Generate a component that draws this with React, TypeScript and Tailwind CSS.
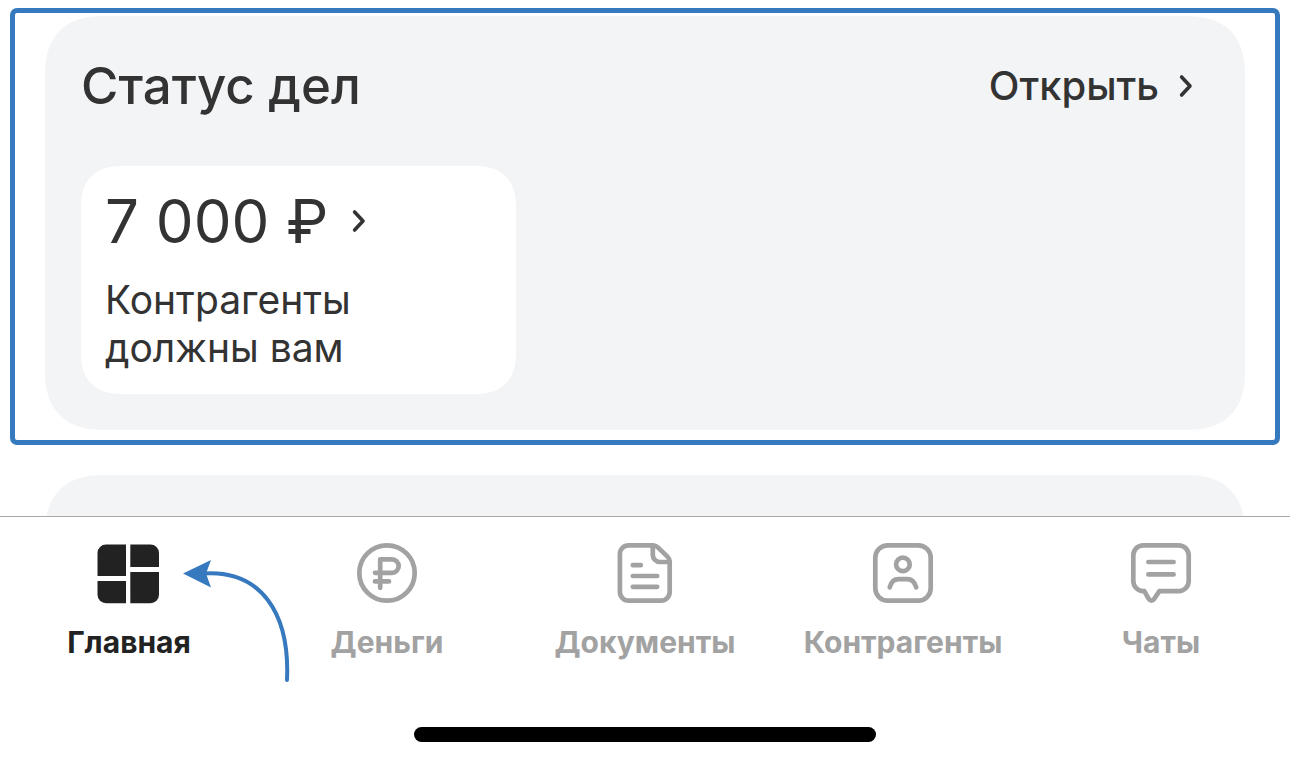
import type { ReactNode } from 'react';
import clsx from 'clsx';

interface TabItem {
  id: string;
  label: string;
  icon: ReactNode;
}

function Chevron() {
  return (
    <svg
      viewBox="0 0 14 24"
      className="w-3.5 h-6 shrink-0"
      fill="none"
      stroke="currentColor"
      strokeWidth="3.6"
      strokeLinecap="round"
      strokeLinejoin="round"
      aria-hidden="true"
    >
      <path d="M2.6 3 L11 12 L2.6 21" />
    </svg>
  );
}

function TabIcon({ children }: { children: ReactNode }) {
  return (
    <svg
      viewBox="0 0 64 64"
      className="size-16"
      fill="none"
      stroke="currentColor"
      strokeWidth="4.7"
      strokeLinecap="round"
      strokeLinejoin="round"
      aria-hidden="true"
    >
      {children}
    </svg>
  );
}

const TABS: TabItem[] = [
  {
    id: 'home',
    label: 'Главная',
    icon: (
      <TabIcon>
        <g fill="currentColor" stroke="none">
          <path d="M9 2.5 H29 V34 H0.5 V11 A8.5 8.5 0 0 1 9 2.5 Z" />
          <path d="M0.5 39 H29 V61.3 H9 A8.5 8.5 0 0 1 0.5 52.8 Z" />
          <path d="M33.3 2.5 H53.5 A8.5 8.5 0 0 1 62 11 V25 H33.3 Z" />
          <path d="M33.3 30 H62 V52.8 A8.5 8.5 0 0 1 53.5 61.3 H33.3 Z" />
        </g>
      </TabIcon>
    ),
  },
  {
    id: 'money',
    label: 'Деньги',
    icon: (
      <TabIcon>
        <circle cx="32" cy="31" r="27.7" />
        <path d="M25.2 45.8 V17.4 H37 A6.7 6.7 0 0 1 37 30.8 H20" />
        <path d="M20 39.4 H34" />
      </TabIcon>
    ),
  },
  {
    id: 'documents',
    label: 'Документы',
    icon: (
      <TabIcon>
        <path d="M15.5 3.3 H40 C42 3.3 43.3 3.9 44.6 5.2 L54.2 14.4 C55.9 16 56.7 17.4 56.7 19.6 V50 A8.7 8.7 0 0 1 48 58.7 H15.5 A8.7 8.7 0 0 1 6.9 50 V12 A8.7 8.7 0 0 1 15.5 3.3 Z" />
        <path d="M39.8 3.6 V13 A7 7 0 0 0 46.8 20 H56.4" />
        <path d="M19.8 23.2 H27.8 M19.8 34 H44.2 M19.8 44.8 H44.2" />
      </TabIcon>
    ),
  },
  {
    id: 'contractors',
    label: 'Контрагенты',
    icon: (
      <TabIcon>
        <rect x="4.3" y="3.3" width="55.4" height="55.4" rx="12.5" />
        <circle cx="31.9" cy="22.4" r="6.8" />
        <path d="M18.7 45.4 C20 40.4 22.6 37.2 27.6 37.2 H36.2 C41.2 37.2 43.8 40.4 45.2 45.4" />
      </TabIcon>
    ),
  },
  {
    id: 'chats',
    label: 'Чаты',
    icon: (
      <TabIcon>
        <path d="M14.3 3.3 H49.7 A10 10 0 0 1 59.7 13.3 V39.1 A10 10 0 0 1 49.7 49.1 H30.4 L25.3 56.8 C23.8 59.2 21.2 59.2 19.7 56.8 L15.3 49.1 H14.3 A10 10 0 0 1 4.3 39.1 V13.3 A10 10 0 0 1 14.3 3.3 Z" />
        <path d="M19.4 20 H44.6 M19.4 32.4 H44.6" />
      </TabIcon>
    ),
  },
];

function StatusCard() {
  return (
    <section className="rounded-[60px] [corner-shape:superellipse(1.3)] bg-[#f3f4f6] px-9 pt-10 pb-9">
      <div className="flex items-center justify-between pr-4">
        <h2 className="text-[51px] leading-[60px] font-medium">Статус дел</h2>
        <a href="#status" className="flex items-center gap-5 text-[40px] leading-[60px] font-medium">
          Открыть
          <Chevron />
        </a>
      </div>
      <a
        href="#debts"
        className="mt-[50px] block w-[435px] max-w-full rounded-[42px] [corner-shape:superellipse(1.3)] bg-white px-6 pt-5 pb-[22px]"
      >
        <span className="flex items-center gap-6 text-[60px] leading-[70px]">
          7 000 ₽
          <Chevron />
        </span>
        <span className="mt-5 block text-[39px] leading-12">
          Контрагенты
          <br />
          должны вам
        </span>
      </a>
    </section>
  );
}

function PointerArrow() {
  return (
    <svg
      viewBox="0 0 110 130"
      className="pointer-events-none absolute top-9 left-[182px] w-[110px] h-[130px] text-[#3679be]"
      aria-hidden="true"
    >
      <path
        d="M22 20.5 C79 17 108 60 105 127"
        fill="none"
        stroke="currentColor"
        strokeWidth="4"
        strokeLinecap="round"
      />
      <path d="M1 20.5 L29 7 L24 20.5 L29 34.5 Z" fill="currentColor" />
    </svg>
  );
}

function TabBar({ active }: { active: string }) {
  return (
    <nav className="relative border-t border-[#a8a8a8] bg-white">
      <ul className="flex pt-[25px]">
        {TABS.map((tab) => (
          <li key={tab.id} className="flex-1 basis-0 min-w-0">
            <a
              href={`#${tab.id}`}
              aria-current={tab.id === active ? 'page' : undefined}
              className={clsx(
                'flex flex-col items-center gap-4 text-[30px] leading-10 font-bold whitespace-nowrap',
                tab.id === active ? 'text-[#222222]' : 'text-[#a2a2a2]'
              )}
            >
              {tab.icon}
              {tab.label}
            </a>
          </li>
        ))}
      </ul>
      <PointerArrow />
      <div className="mx-auto mt-[65px] mb-6 h-[15px] w-[462px] max-w-full rounded-full bg-black" />
    </nav>
  );
}

export default function App() {
  return (
    <div className="bg-white pt-2 font-['Inter','Liberation_Sans',sans-serif] text-[#333333]">
      <main>
        <div className="mx-2.5 rounded-[7px] border-5 border-[#3679be] px-[30px] pt-[3px] pb-2.5">
          <StatusCard />
        </div>
        <div className="mt-[30px] h-[41px] overflow-hidden px-[45px]">
          <div className="h-40 rounded-[60px] [corner-shape:superellipse(1.3)] bg-[#f3f4f6]" />
        </div>
      </main>
      <TabBar active="home" />
    </div>
  );
}
